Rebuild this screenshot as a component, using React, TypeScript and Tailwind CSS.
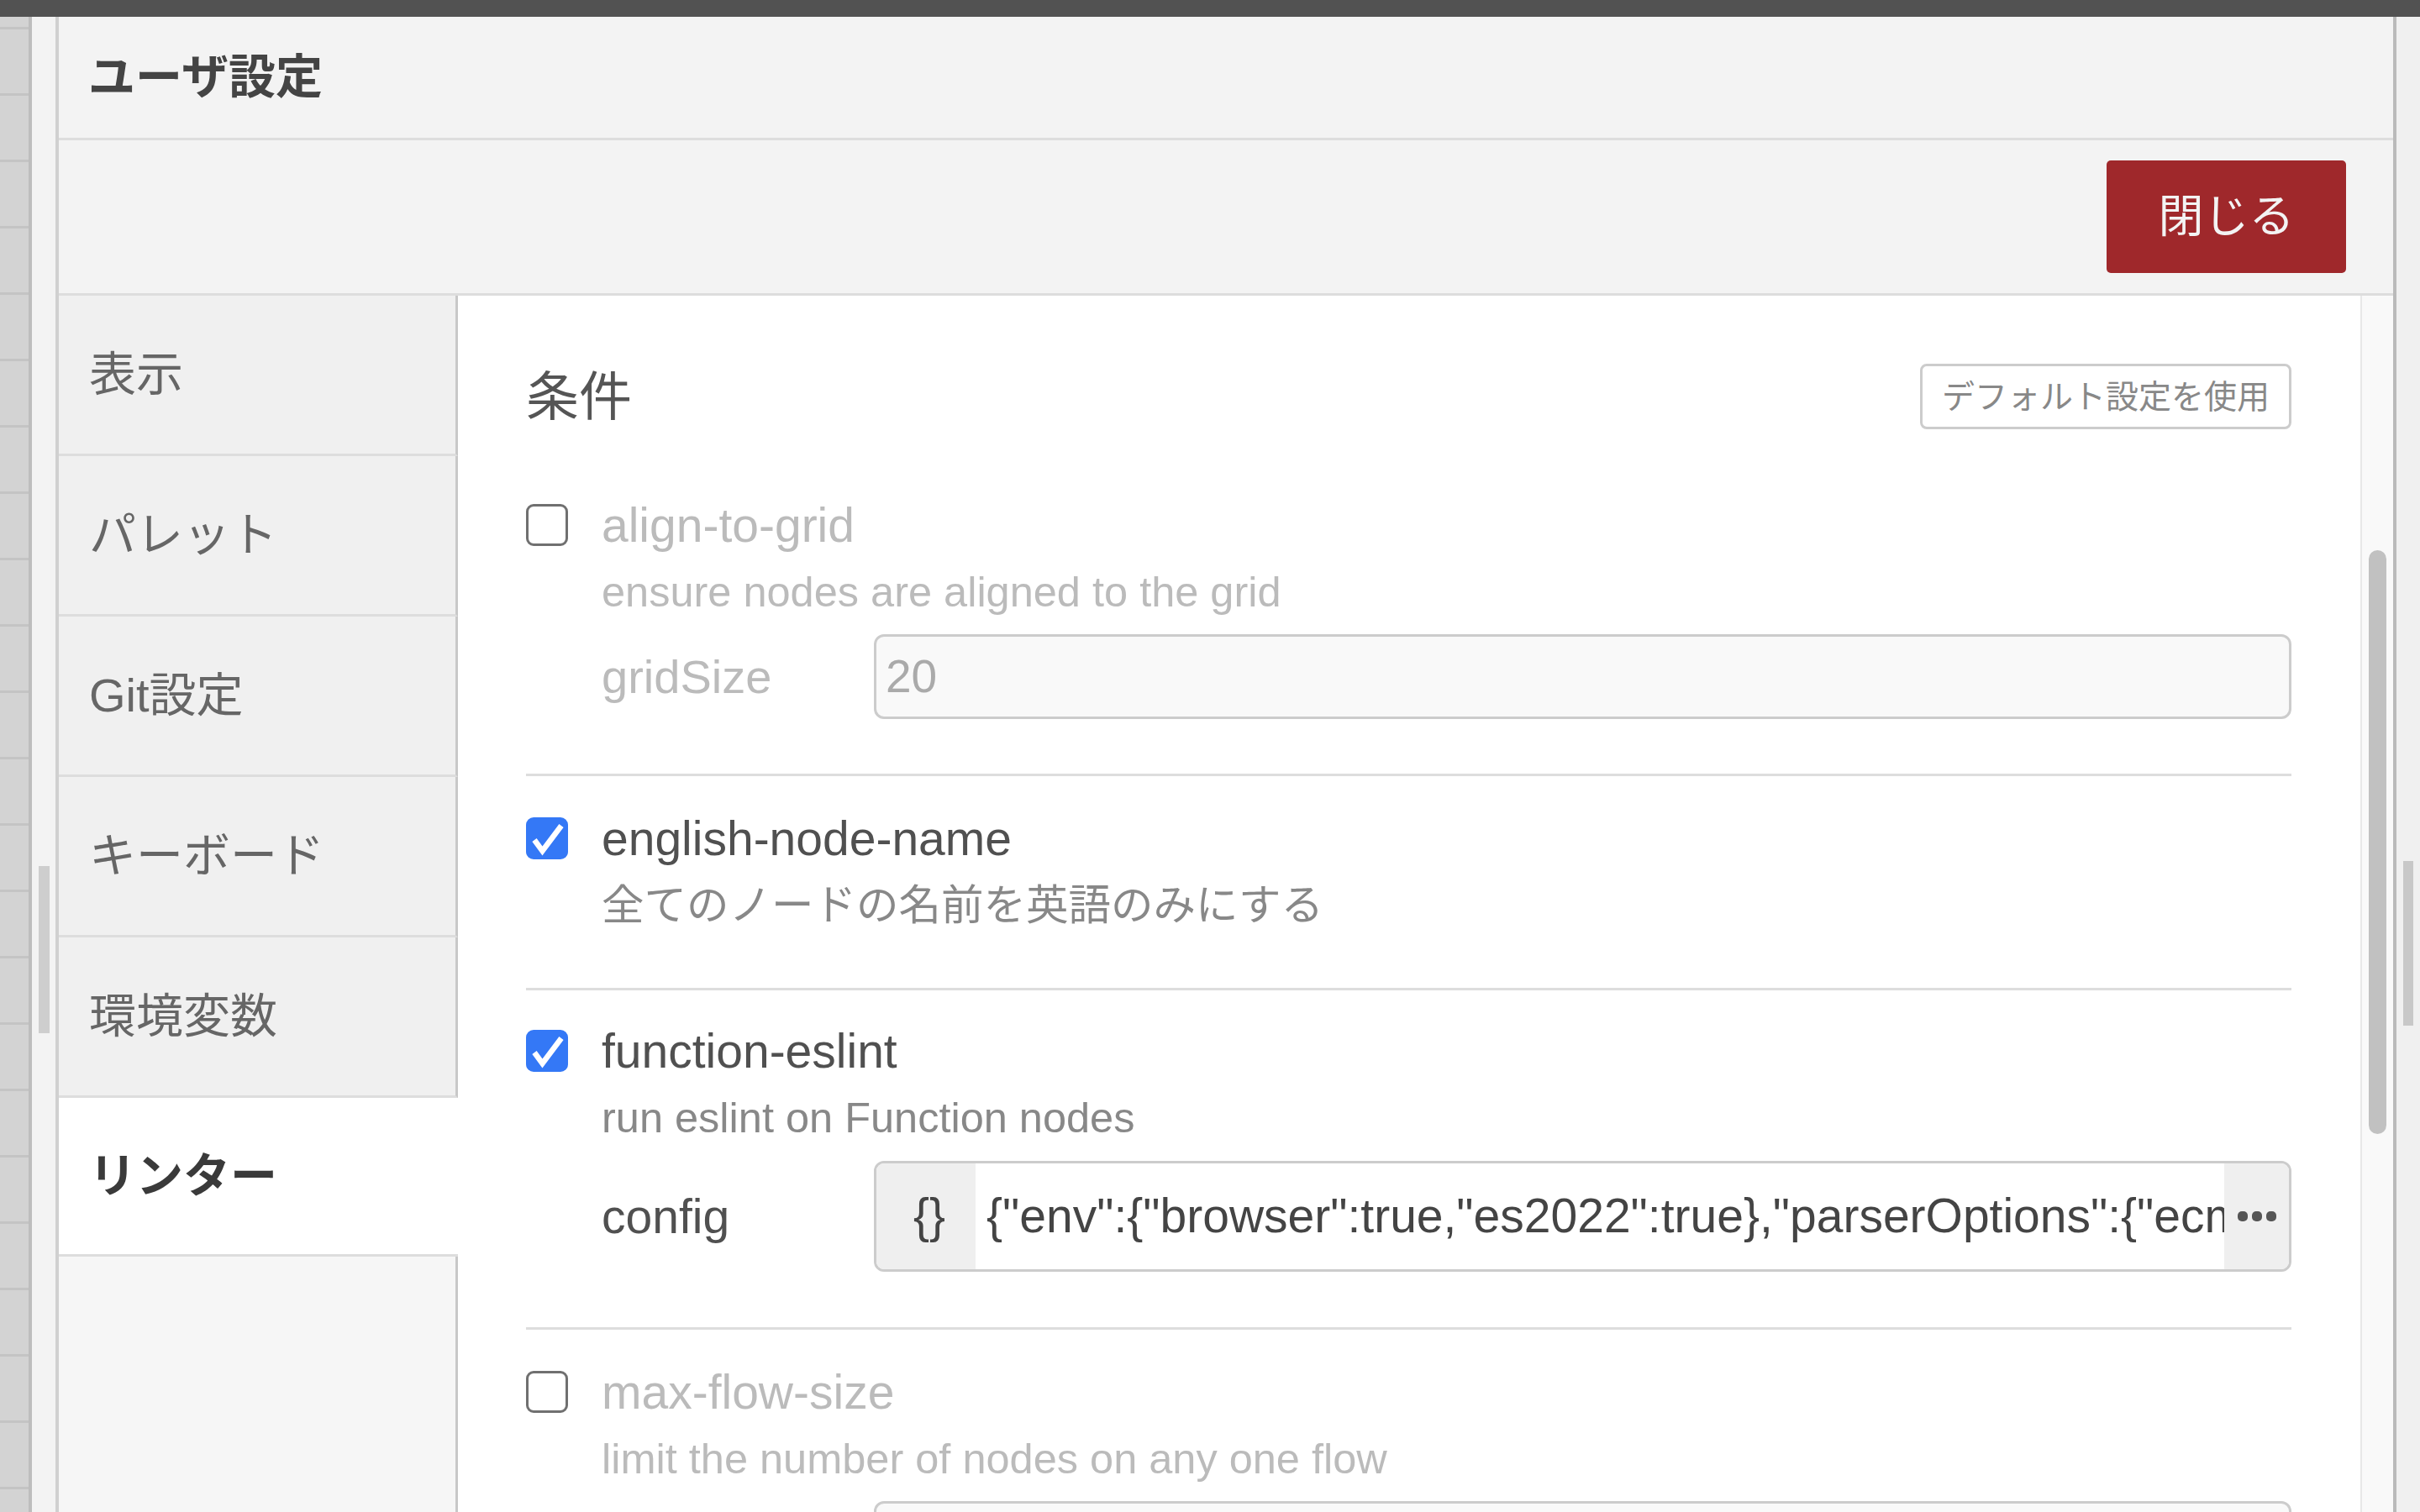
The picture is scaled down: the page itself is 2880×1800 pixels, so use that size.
import React from 'react';

const tabs = ['表示', 'パレット', 'Git設定', 'キーボード', '環境変数', 'リンター'];
const activeTab = 5;

const Checkbox: React.FC<{ checked?: boolean }> = ({ checked }) =>
  checked ? (
    <div className="w-[50px] h-[50px] shrink-0 rounded-[9px] bg-[#3478f6] flex items-center justify-center">
      <svg width="50" height="50" viewBox="0 0 50 50">
        <path d="M10 27 L19.5 40 L42 10" fill="none" stroke="#ffffff" strokeWidth="6.5" strokeLinejoin="miter" />
      </svg>
    </div>
  ) : (
    <div className="w-[50px] h-[50px] shrink-0 rounded-[9px] border-[3px] border-[#707070] bg-white" />
  );

// label row: checkbox + setting name
const NameRow: React.FC<{ checked?: boolean; muted?: boolean; name: string }> = ({ checked, muted, name }) => (
  <div className="flex items-center gap-[40px]">
    <Checkbox checked={checked} />
    <span className={muted ? 'text-[57px] leading-[50px] text-[#bbbbbb]' : 'text-[57px] leading-[50px] text-[#505050]'}>{name}</span>
  </div>
);

const Desc: React.FC<{ muted?: boolean; children: React.ReactNode }> = ({ muted, children }) => (
  <div className={muted ? 'mt-[26px] ml-[90px] text-[50.5px] leading-[58px] text-[#bbbbbb]' : 'mt-[26px] ml-[90px] text-[50.5px] leading-[58px] text-[#888888]'}>
    {children}
  </div>
);

const Ellipsis = () => (
  <svg width="46" height="14" viewBox="0 0 46 14">
    <rect x="0" y="1" width="12" height="12" rx="5" fill="#555555" />
    <rect x="17" y="1" width="12" height="12" rx="5" fill="#555555" />
    <rect x="34" y="1" width="12" height="12" rx="5" fill="#555555" />
  </svg>
);

export default function App() {
  return (
    <div className="w-[2880px] h-[1800px] overflow-hidden flex flex-col bg-[#f0f0f0] font-['Liberation_Sans','Noto_Sans_CJK_JP',sans-serif]">
      {/* top bar */}
      <div className="h-[20px] shrink-0 bg-[#525252]" />

      <div className="flex flex-1 min-h-0">
        {/* workspace canvas edge */}
        <div className="w-[34px] shrink-0 bg-[repeating-linear-gradient(to_bottom,#d3d3d3_0px,#d3d3d3_12px,#c4c4c4_12px,#c4c4c4_15px,#d3d3d3_15px,#d3d3d3_79px)]" />
        <div className="w-[4px] shrink-0 bg-[#bdbdbd]" />
        <div className="w-[28px] shrink-0 bg-[#f3f3f3] flex flex-col">
          <div className="mt-[1011px] ml-[8px] w-[13px] h-[199px] bg-[#cecece]" />
        </div>

        {/* dialog */}
        <div className="flex-1 min-w-0 flex flex-col bg-[#f3f3f3] border-l-4 border-l-[#d0d0d0] border-r-4 border-r-[#bababa]">
          <div className="h-[147px] shrink-0 flex items-center pl-[35px] border-b-[3px] border-[#dddddd]">
            <h1 className="text-[56px] leading-none font-bold text-[#444444]">ユーザ設定</h1>
          </div>

          <div className="h-[185px] shrink-0 flex justify-end items-start pt-[24px] pr-[56px] border-b-[3px] border-[#dddddd]">
            <button className="w-[285px] h-[134px] rounded-[5px] bg-[#9f282b] text-[54px] leading-none text-[#f3f3f3] flex items-center justify-center">
              閉じる
            </button>
          </div>

          <div className="flex flex-1 min-h-0">
            {/* tabs */}
            <div className="w-[475px] shrink-0 flex flex-col">
              {tabs.map((t, i) =>
                i === activeTab ? (
                  <div key={t} className="h-[189px] shrink-0 flex items-center pl-[36px] bg-white border-b-[3px] border-[#dddddd]">
                    <span className="text-[56px] leading-none font-bold text-[#3a3a3a]">{t}</span>
                  </div>
                ) : (
                  <div key={t} className="h-[191px] shrink-0 flex items-center pl-[36px] bg-[#f0f0f0] border-b-[3px] border-b-[#dddddd] border-r-[3px] border-r-[#c8c8c8]">
                    <span className="text-[56px] leading-none text-[#666666]">{t}</span>
                  </div>
                )
              )}
              <div className="flex-1 bg-[#f6f6f6] border-r-[3px] border-[#c8c8c8]" />
            </div>

            {/* content */}
            <div className="flex-1 min-w-0 flex bg-white">
              <div className="flex-1 min-w-0 overflow-hidden pl-[81px] pr-[82px] pt-[81px]">
                <div className="h-[78px] flex items-center justify-between">
                  <h3 className="text-[63px] leading-none text-[#555555]">条件</h3>
                  <button className="h-[78px] w-[442px] rounded-[8px] border-[3px] border-[#cccccc] bg-white text-[39px] leading-none text-[#888888] flex items-center justify-center">
                    デフォルト設定を使用
                  </button>
                </div>

                {/* align-to-grid */}
                <div className="mt-[89px] pb-[65px]">
                  <NameRow muted name="align-to-grid" />
                  <Desc muted>ensure nodes are aligned to the grid</Desc>
                  <div className="mt-[21px] ml-[90px] flex items-center">
                    <div className="w-[324px] shrink-0 text-[56px] leading-[56px] text-[#bbbbbb]">gridSize</div>
                    <div className="flex-1 h-[101px] rounded-[12px] border-[3px] border-[#cccccc] bg-[#f9f9f9] flex items-center pl-[11px] text-[55px] text-[#aaaaaa]">
                      20
                    </div>
                  </div>
                </div>

                {/* english-node-name */}
                <div className="border-t-[3px] border-[#dddddd] pt-[49px] pb-[69px]">
                  <NameRow checked name="english-node-name" />
                  <Desc>全てのノードの名前を英語のみにする</Desc>
                </div>

                {/* function-eslint */}
                <div className="border-t-[3px] border-[#dddddd] pt-[47px] pb-[66px]">
                  <NameRow checked name="function-eslint" />
                  <Desc>run eslint on Function nodes</Desc>
                  <div className="mt-[22px] ml-[90px] flex items-center">
                    <div className="w-[324px] shrink-0 text-[57px] leading-[57px] text-[#505050]">config</div>
                    <div className="flex-1 min-w-0 h-[132px] rounded-[12px] border-[3px] border-[#cccccc] overflow-hidden flex">
                      <div className="w-[118px] shrink-0 bg-[#efefef] flex items-center pl-[44px] text-[57px] text-[#444444]">{'{}'}</div>
                      <div className="flex-1 min-w-0 overflow-hidden whitespace-nowrap bg-white flex items-center pl-[13px] text-[57px] text-[#444444]">
                        {'{"env":{"browser":true,"es2022":true},"parserOptions":{"ecmaVersion":"latest"},"rules":{}}'}
                      </div>
                      <div className="w-[77px] shrink-0 bg-[#efefef] flex items-center justify-center">
                        <Ellipsis />
                      </div>
                    </div>
                  </div>
                </div>

                {/* max-flow-size */}
                <div className="border-t-[3px] border-[#dddddd] pt-[49px]">
                  <NameRow muted name="max-flow-size" />
                  <Desc muted>limit the number of nodes on any one flow</Desc>
                  <div className="mt-[21px] ml-[90px] flex items-center">
                    <div className="w-[324px] shrink-0" />
                    <div className="flex-1 h-[101px] rounded-[12px] border-[3px] border-[#cccccc] bg-[#f9f9f9]" />
                  </div>
                </div>
              </div>

              {/* scrollbar */}
              <div className="w-[39px] shrink-0 bg-[#f9f9f9] border-l-2 border-[#e8e8e8] flex flex-col items-center">
                <div className="mt-[303px] w-[21px] h-[695px] rounded-full bg-[#c1c1c1]" />
              </div>
            </div>
          </div>
        </div>

        {/* outer scrollbar */}
        <div className="w-[28px] shrink-0 bg-[#f0f0f0] flex flex-col">
          <div className="mt-[1005px] ml-[8px] w-[12px] h-[196px] bg-[#c8c8c8]" />
        </div>
      </div>
    </div>
  );
}
